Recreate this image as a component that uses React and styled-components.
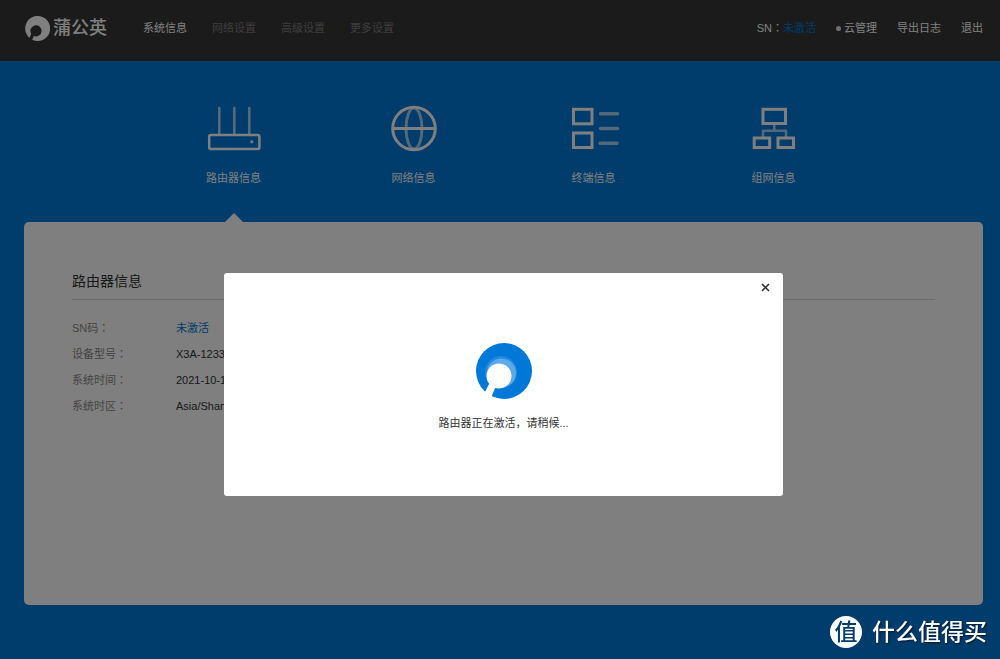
import React from 'react';
import { useState } from 'react';
import styled, { createGlobalStyle } from 'styled-components';

const GlobalStyle = createGlobalStyle`
  * {
    box-sizing: border-box;
  }
  body {
    margin: 0;
    background-color: #0078d8;
    font-family: 'Liberation Sans', 'Noto Sans CJK SC', sans-serif;
    font-size: 11px;
    line-height: 16px;
    color: #333;
  }
`;

const Page = styled.div`
  display: flex;
  flex-direction: column;
  min-height: 100vh;
`;

const Header = styled.header`
  display: flex;
  align-items: center;
  height: 61px;
  padding: 0 17px 5px 25px;
  background-color: #363636;
`;

const Brand = styled.a`
  display: flex;
  align-items: center;
  gap: 3px;
  margin-right: 36px;
  color: #fff;
  font-size: 18px;
  font-weight: 500;
  text-decoration: none;
`;

const Nav = styled.nav`
  display: flex;
  gap: 25px;
`;

const NavLink = styled.a`
  color: ${(props) => (props.$active ? '#fff' : '#7c7c7c')};
  text-decoration: none;
`;

const Tools = styled.div`
  display: flex;
  gap: 20px;
  margin-left: auto;
  color: #fff;
`;

const ToolLink = styled.a`
  display: flex;
  align-items: center;
  gap: 3px;
  color: #fff;
  text-decoration: none;
`;

const Dot = styled.span`
  width: 5px;
  height: 5px;
  border-radius: 50%;
  background-color: #ddd;
`;

/* The TC face centres the full-width colon in its box */
const Colon = styled.span`
  font-family: 'Noto Sans CJK TC', sans-serif;
  line-height: 1;
`;

const SnLink = styled.a`
  color: #0078d8;
  text-decoration: none;
`;

const Main = styled.main`
  display: flex;
  flex: 1;
  flex-direction: column;
  padding: 0 17px 54px 24px;
`;

const Tabs = styled.div`
  display: flex;
  justify-content: center;
  height: 161px;
`;

const Tab = styled.button`
  display: flex;
  flex-direction: column;
  align-items: center;
  width: 180px;
  padding: 38px 0 0;
  border: none;
  background: none;
  color: #fff;
  font: inherit;
  cursor: pointer;
`;

const TabLabel = styled.span`
  margin-top: 11px;
`;

/* Little pointer that joins the active tab to the panel */
const Pointer = styled.span`
  margin-top: auto;
  border: 9px solid transparent;
  border-top: none;
  border-bottom-color: #fff;
`;

const Panel = styled.section`
  flex: 1;
  padding: 48px;
  border-radius: 5px;
  background-color: #fff;
`;

const PanelTitle = styled.h2`
  margin: 0 0 15px;
  padding-bottom: 7px;
  border-bottom: 1px solid #ddd;
  font-size: 14px;
  font-weight: 400;
  line-height: 22px;
`;

const InfoList = styled.dl`
  display: grid;
  grid-template-columns: 104px 1fr;
  margin: 0;
  line-height: 26px;
`;

const InfoLabel = styled.dt`
  color: #888;
`;

const InfoValue = styled.dd`
  margin: 0;
  color: ${(props) => (props.$highlight ? '#0078d8' : '#333')};
`;

const Overlay = styled.div`
  position: fixed;
  inset: 0;
  display: flex;
  justify-content: center;
  align-items: flex-start;
  padding: 273px 17px 0 24px;
  background-color: rgba(0, 0, 0, 0.5);
`;

const Modal = styled.div`
  display: flex;
  flex-direction: column;
  align-items: center;
  width: 559px;
  padding-bottom: 65px;
  border-radius: 3px;
  background-color: #fff;
`;

const CloseButton = styled.button`
  display: flex;
  align-self: flex-end;
  margin: 5px 8px 0 0;
  padding: 5px;
  border: none;
  background: none;
  color: #333;
  cursor: pointer;
`;

const ModalText = styled.p`
  margin: 16px 0 0;
`;

const Loader = styled.div`
  display: flex;
  margin-top: 46px;
`;

const Watermark = styled.div`
  position: fixed;
  right: 13px;
  bottom: 11px;
  display: flex;
  align-items: center;
  gap: 10px;
  color: #fff;
  font-size: 23px;
  font-weight: 500;
  line-height: 32px;
  text-shadow: 1px 1px 2px rgba(0, 0, 0, 0.6);
`;

const WatermarkBadge = styled.span`
  width: 32px;
  border-radius: 50%;
  background-color: #fff;
  color: #003c6c;
  text-align: center;
  text-shadow: none;
`;

const BrandLogo = () => (
  <svg width="25" height="25" viewBox="0 0 56 56" aria-hidden="true">
    <path
      d="M10 49A28 28 0 1 1 16 53L20 45A12.500 12.500 0 1 0 14 40Z"
      fill="#fff"
    />
  </svg>
);

const LoadingLogo = () => (
  <svg width="56" height="56" viewBox="0 0 56 56" aria-hidden="true">
    <circle cx="28" cy="28" r="28" fill="#0078d8" />
    <circle cx="25" cy="29" r="16" fill="#2488dd" />
    <circle cx="25.500" cy="30" r="14.600" fill="#5aa9e8" />
    <circle cx="23" cy="33" r="12.500" fill="#fff" />
    <path d="M14 39L8 51L14 57L20 43Z" fill="#fff" />
  </svg>
);

const RouterIcon = () => (
  <svg width="60" height="60" viewBox="0 0 60 60" fill="none" stroke="#fff" strokeWidth="2.5">
    <path d="M15.300 9V35M30.300 9V35M45.300 9V35" strokeLinecap="round" opacity="0.7" />
    <rect x="5.200" y="36" width="50.200" height="14" rx="1.500" />
    <circle cx="47.800" cy="42.800" r="1.700" fill="#fff" stroke="none" opacity="0.8" />
  </svg>
);

const GlobeIcon = () => (
  <svg width="60" height="60" viewBox="0 0 60 60" fill="none" stroke="#fff" strokeWidth="3">
    <path d="M9 29.500H51" />
    <ellipse cx="30" cy="29.500" rx="8" ry="20.500" opacity="0.65" />
    <circle cx="30" cy="29.500" r="21.300" />
  </svg>
);

const TerminalIcon = () => (
  <svg width="60" height="60" viewBox="0 0 60 60" fill="none" stroke="#fff" strokeWidth="3">
    <rect x="9.500" y="10.300" width="18.500" height="14.500" />
    <rect x="9.500" y="34" width="18.500" height="14.500" />
    <path
      d="M36.500 14.700H53.500M36.500 29.500H53.500M36 44.300H53"
      strokeWidth="3.6"
      strokeLinecap="round"
      opacity="0.65"
    />
  </svg>
);

const GroupIcon = () => (
  <svg width="60" height="60" viewBox="0 0 60 60" fill="none" stroke="#fff" strokeWidth="3">
    <path d="M30.300 26V31.700M19 38V31.700H42V38" strokeWidth="2.6" opacity="0.65" />
    <rect x="19" y="10.300" width="22.500" height="14.200" />
    <rect x="10.200" y="39" width="15.500" height="9.500" />
    <rect x="34" y="39" width="15.500" height="9.500" />
  </svg>
);

const navItems = ['系统信息', '网络设置', '高级设置', '更多设置'];

const tabs = [
  { label: '路由器信息', Icon: RouterIcon },
  { label: '网络信息', Icon: GlobeIcon },
  { label: '终端信息', Icon: TerminalIcon },
  { label: '组网信息', Icon: GroupIcon },
];

const info = [
  { label: 'SN码', value: '未激活', highlight: true },
  { label: '设备型号', value: 'X3A-1233' },
  { label: '系统时间', value: '2021-10-1' },
  { label: '系统时区', value: 'Asia/Shanghai' },
];

const App = () => {
  const [activeTab, setActiveTab] = useState(0);
  const [open, setOpen] = useState(true);

  return (
    <Page>
      <GlobalStyle />
      <Header>
        <Brand href="#">
          <BrandLogo />
          蒲公英
        </Brand>
        <Nav>
          {navItems.map((item, index) => (
            <NavLink href="#" key={item} $active={index === 0}>
              {item}
            </NavLink>
          ))}
        </Nav>
        <Tools>
          <span>
            SN<Colon>：</Colon>
            <SnLink href="#">未激活</SnLink>
          </span>
          <ToolLink href="#">
            <Dot />
            云管理
          </ToolLink>
          <ToolLink href="#">导出日志</ToolLink>
          <ToolLink href="#">退出</ToolLink>
        </Tools>
      </Header>
      <Main>
        <Tabs>
          {tabs.map(({ label, Icon }, index) => (
            <Tab key={label} type="button" onClick={() => setActiveTab(index)}>
              <Icon />
              <TabLabel>{label}</TabLabel>
              {index === activeTab && <Pointer />}
            </Tab>
          ))}
        </Tabs>
        <Panel>
          <PanelTitle>路由器信息</PanelTitle>
          <InfoList>
            {info.map((row) => (
              <React.Fragment key={row.label}>
                <InfoLabel>
                  {row.label}
                  <Colon>：</Colon>
                </InfoLabel>
                <InfoValue $highlight={row.highlight}>{row.value}</InfoValue>
              </React.Fragment>
            ))}
          </InfoList>
        </Panel>
      </Main>
      {open && (
        <Overlay>
          <Modal role="dialog" aria-modal="true">
            <CloseButton type="button" aria-label="关闭" onClick={() => setOpen(false)}>
              <svg width="9" height="9" viewBox="0 0 9 9" stroke="currentColor" strokeWidth="1.6">
                <path d="M1 1L8 8M8 1L1 8" />
              </svg>
            </CloseButton>
            <Loader>
              <LoadingLogo />
            </Loader>
            <ModalText>路由器正在激活，请稍候...</ModalText>
          </Modal>
        </Overlay>
      )}
      <Watermark>
        <WatermarkBadge>值</WatermarkBadge>
        <span>什么值得买</span>
      </Watermark>
    </Page>
  );
};

export default App;
